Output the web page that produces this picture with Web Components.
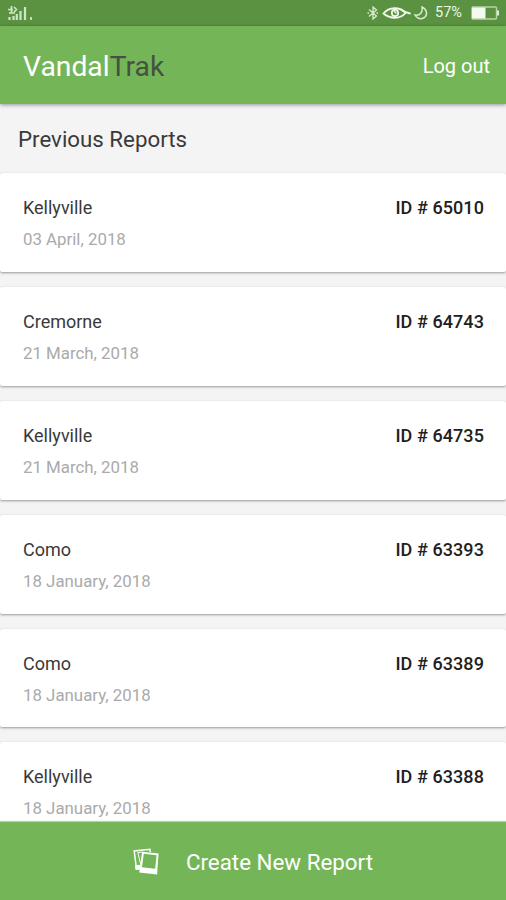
<!DOCTYPE html>
<html lang="en">
<head>
<meta charset="utf-8">
<title>VandalTrak</title>
<style>
html, body { margin: 0; height: 100%; overflow: hidden; }
body { font-family: Roboto, "Liberation Sans", sans-serif; background: #f4f4f4; }
</style>
</head>
<body>
<vandal-app></vandal-app>
<script>
function define(name, html) {
  const template = document.createElement('template');
  template.innerHTML = html;
  customElements.define(name, class extends HTMLElement {
    constructor() {
      super();
      this.attachShadow({ mode: 'open' }).appendChild(template.content.cloneNode(true));
    }
  });
}

define('status-bar', `
<style>
:host { display: flex; align-items: center; height: 26px; box-sizing: border-box; padding: 0 7px 0 8px; background: #5b9241; color: #ebf7e5; font-size: 14.500px; }
svg { display: block; flex: none; }
.signal { margin-right: auto; }
.eye { margin-left: 3px; }
.moon { margin-left: 3px; }
span { margin: 0 8px 0 7px; line-height: 26px; width: 28px; white-space: nowrap; }
</style>
<svg class="signal" width="25" height="16" viewBox="0 0 25 16" fill="none" stroke="#cfe6c4" stroke-width="2.200">
  <path d="M1.500 15v-3M5.500 15v-4M8.800 15V9M12.500 15V6M17 15V2" /><path d="M23 15v-3" stroke-width="1.800"/>
  <path d="M0 4.500h5M3.500 1v7M1 8h6M6 2l3 3M6 7l3-3" stroke-width="1.700"/>
</svg>
<svg width="12" height="14" viewBox="0 0 12 14" fill="none" stroke="#d7eccd" stroke-width="1.300"><path d="M2 3.500l7.500 6.500L6 13V1l3.500 3L2 10.500M.5 7h1.500M9.500 7H11"/></svg>
<svg class="eye" width="29" height="14" viewBox="0 0 29 14" fill="none" stroke="#f2faee" stroke-linecap="round"><path d="M1.500 7.500C7 .5 18 .5 23.500 7C18 13.500 8 13 1.500 7.500Z" stroke-width="1.900"/><path d="M19 3.500Q24 7 28 7.500" stroke-width="1.800"/><circle cx="13" cy="7" r="3.200" stroke-width="1.700"/><path d="M12.500 5.500l1.500 1.500" stroke-width="1.500"/></svg>
<svg class="moon" width="14" height="14" viewBox="0 0 14 14" fill="none" stroke="#d7eccd" stroke-width="1.500"><path d="M8 1C14 4 13.500 10 9.500 12C6 13.800 2.500 12 1 9C6 10 9 6 8 1Z"/></svg>
<span>57%</span>
<svg width="28" height="14" viewBox="0 0 28 14"><rect x="1" y="1" width="24.500" height="12" rx="1" fill="none" stroke="#b5d5a7" stroke-width="1.400"/><rect x="1" y="1.500" width="13.500" height="11" fill="#f3faf0"/><path d="M26 4.500h2v5h-2z" fill="#dceed4"/></svg>
`);

define('app-bar', `
<style>
:host { display: flex; align-items: center; justify-content: space-between; height: 78px; box-sizing: border-box; padding: 2px 16px 0 23px; background: #74b657; color: #fff; box-shadow: 0 1px 4px rgba(0,0,0,.4); position: relative; z-index: 1; }
.brand { font-size: 28.300px; white-space: nowrap; }
::slotted(b) { font-weight: 400; color: #465142; }
.action { font-size: 20px; white-space: nowrap; }
</style>
<div class="brand"><slot></slot></div><div class="action"><slot name="action"></slot></div>
`);

define('report-card', `
<style>
:host { display: flex; justify-content: space-between; height: 98.900px; flex: none; box-sizing: border-box; padding: 24px 22px 0 23px; background: #fff; border-radius: 2px; box-shadow: 0 1px 2.500px rgba(0,0,0,.38); white-space: nowrap; }
.place { font-size: 18px; line-height: 22px; color: #393939; }
.date { font-size: 16.850px; line-height: 22px; margin-top: 9px; color: #aaa; }
.id { font-size: 18px; line-height: 22px; font-weight: 500; letter-spacing: .08px; color: #202020; }
</style>
<div><div class="place"><slot name="place"></slot></div><div class="date"><slot name="date"></slot></div></div>
<div class="id">ID # <slot name="number"></slot></div>
`);

define('create-button', `
<style>
:host { display: flex; align-items: center; justify-content: center; height: 78px; flex: none; background: #74b657; color: #fff; position: relative; z-index: 1; font-size: 22.350px; gap: 27px; box-shadow: 0 -1px 1px rgba(80,110,65,.35); white-space: nowrap; }
svg { display: block; }
span { padding-top: 2px; }
</style>
<svg width="26" height="27" viewBox="0 0 27 28" fill="none" stroke="#fff"><path d="M8.500 21.500L3.700 22L1.200 3L17.500 1.200L18 4.300" stroke-width="1.500"/><path d="M2 18l5.500-.7v4.500l-5 .5z" fill="#fff" stroke="none"/><path d="M5 4.700L8 17M5 4.700l5-.5" stroke-width="1"/><path fill="#fff" fill-rule="evenodd" stroke="none" d="M9.500 4L26.500 5.800L25 27.500L6.500 25.500ZM11.200 6L9.300 20L23 21.500L24.500 7.400Z"/></svg>
<span><slot></slot></span>
`);

define('report-list', `
<style>
:host { display: flex; flex-direction: column; flex: 1; min-height: 0; overflow: hidden; background: #f4f4f4; }
h1 { margin: 0; height: 69px; flex: none; padding-left: 18px; font-size: 22.300px; font-weight: 400; line-height: 71px; color: #3a3a3a; }
.cards { display: flex; flex-direction: column; gap: 15px; }
</style>
<h1><slot name="title"></slot></h1><div class="cards"><slot></slot></div>
`);

const reports = [
  ['Kellyville', '03 April, 2018', '65010'],
  ['Cremorne', '21 March, 2018', '64743'],
  ['Kellyville', '21 March, 2018', '64735'],
  ['Como', '18 January, 2018', '63393'],
  ['Como', '18 January, 2018', '63389'],
  ['Kellyville', '18 January, 2018', '63388']
];
const cards = reports.map(([place, date, number]) =>
  `<report-card><span slot="place">${place}</span><span slot="date">${date}</span><span slot="number">${number}</span></report-card>`).join('');

define('vandal-app', `
<style>:host { display: flex; flex-direction: column; height: 900px; width: 506px; overflow: hidden; }
status-bar, app-bar { flex: none; }</style>
<status-bar></status-bar>
<app-bar>Vandal<b>Trak</b><span slot="action">Log out</span></app-bar>
<report-list><span slot="title">Previous Reports</span>${cards}</report-list>
<create-button>Create New Report</create-button>
`);
</script>
</body>
</html>
